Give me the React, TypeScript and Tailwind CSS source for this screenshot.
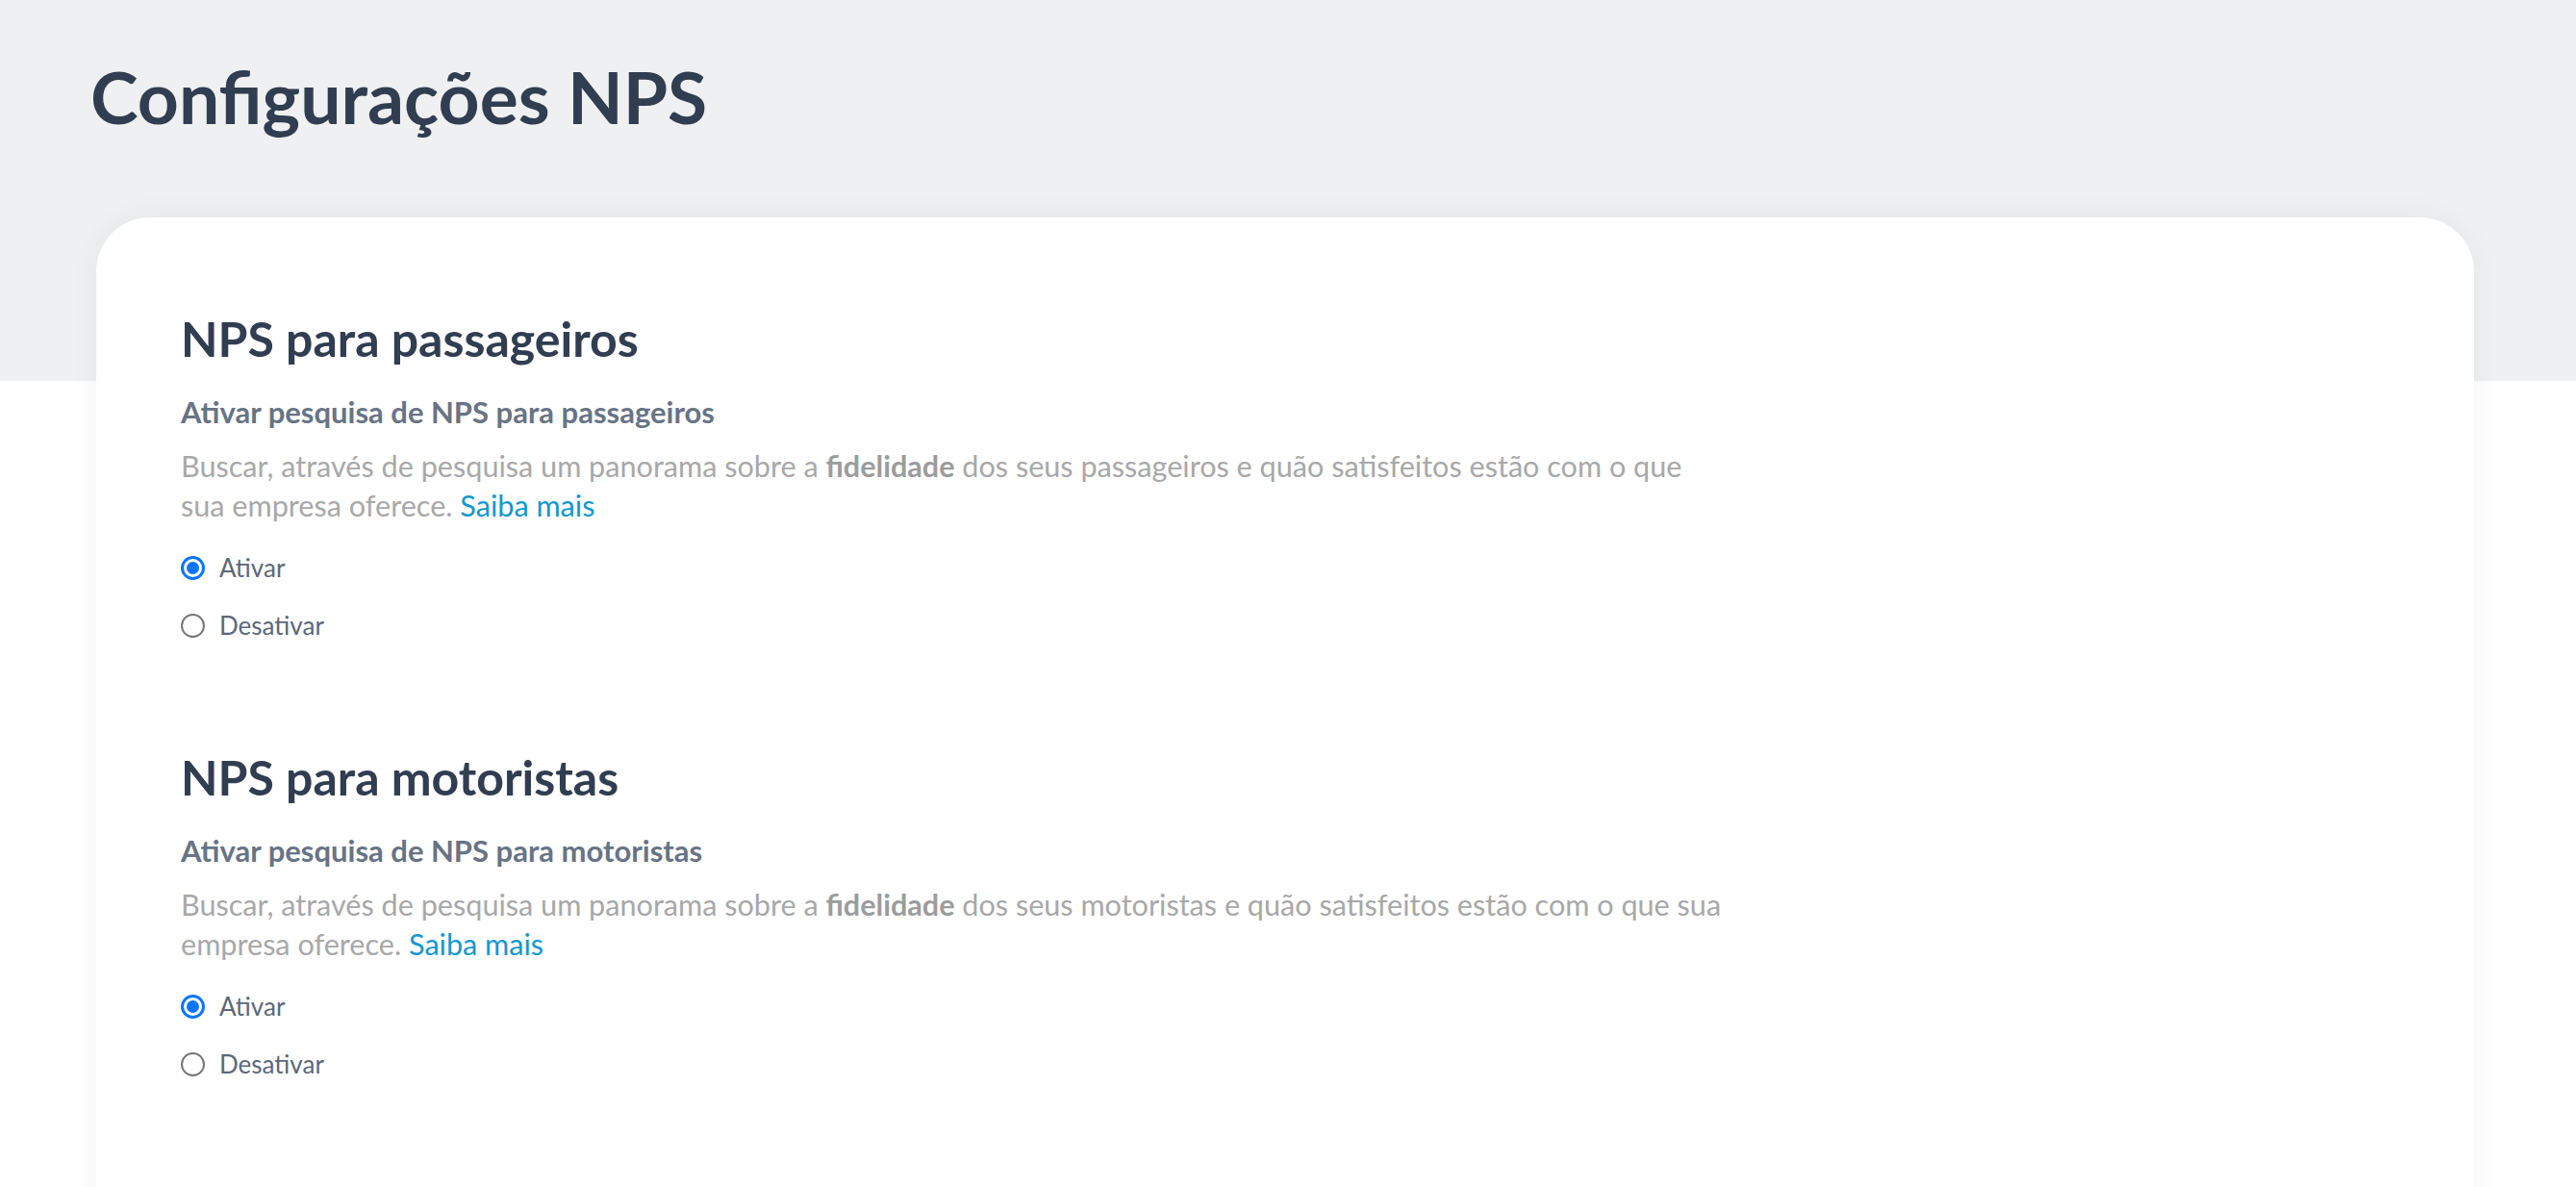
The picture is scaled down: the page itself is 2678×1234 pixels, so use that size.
import { useState } from "react";

type Section = {
  id: string;
  title: string;
  label: string;
  line1: string;
  line1End: string;
  line2: string;
};

const sections: Section[] = [
  {
    id: "passageiros",
    title: "NPS para passageiros",
    label: "Ativar pesquisa de NPS para passageiros",
    line1: "Buscar, através de pesquisa um panorama sobre a ",
    line1End: " dos seus passageiros e quão satisfeitos estão com o que",
    line2: "sua empresa oferece. ",
  },
  {
    id: "motoristas",
    title: "NPS para motoristas",
    label: "Ativar pesquisa de NPS para motoristas",
    line1: "Buscar, através de pesquisa um panorama sobre a ",
    line1End: " dos seus motoristas e quão satisfeitos estão com o que sua",
    line2: "empresa oferece. ",
  },
];

const Radio = ({ checked, label, onClick }: { checked: boolean; label: string; onClick: () => void }) => (
  <label className="flex items-center gap-[15px] cursor-pointer" onClick={onClick}>
    {checked ? (
      <span className="w-[25px] h-[25px] rounded-full border-[3px] border-[#0b75fd] p-[3px] flex">
        <span className="flex-1 rounded-full bg-[#0b75fd]" />
      </span>
    ) : (
      <span className="w-[25px] h-[25px] rounded-full border-2 border-[#767676]" />
    )}
    <span className="text-[26px] text-[#5d6778] leading-none">{label}</span>
  </label>
);

const NpsSection = ({ section }: { section: Section }) => {
  const [active, setActive] = useState(true);
  return (
    <section>
      <h2 className="text-[50px] font-bold text-[#313d50] leading-[60px]">{section.title}</h2>
      <h3 className="mt-[28px] text-[31px] font-bold text-[#687385] leading-[37px]">{section.label}</h3>
      <p className="mt-[17px] text-[30.6px] text-[#a8a8a8] leading-[41px]">
        {section.line1}
        <strong className="font-bold text-[#9c9c9c]">fidelidade</strong>
        {section.line1End}
        <br />
        {section.line2}
        <a href="#" className="text-[#1497cf]">Saiba mais</a>
      </p>
      <div className="mt-[31px] flex flex-col gap-[34px]">
        <Radio checked={active} label="Ativar" onClick={() => setActive(true)} />
        <Radio checked={!active} label="Desativar" onClick={() => setActive(false)} />
      </div>
    </section>
  );
};

export default function App() {
  return (
    <div className="min-h-screen bg-[linear-gradient(to_bottom,#eff0f2_396px,#ffffff_396px)] font-['Lato',sans-serif] pb-[200px]">
      <h1 className="pl-[94px] pt-[56px] text-[75px] font-bold text-[#313d50] leading-[88px]">Configurações NPS</h1>
      <div className="mt-[82px] ml-[100px] mr-[106px] bg-white rounded-[56px] shadow-[0_0_30px_rgba(0,0,0,0.05)] pl-[88px] pr-[88px] pt-[96px] pb-[300px] flex flex-col gap-[115px]">
        {sections.map((s) => (
          <NpsSection key={s.id} section={s} />
        ))}
      </div>
    </div>
  );
}
